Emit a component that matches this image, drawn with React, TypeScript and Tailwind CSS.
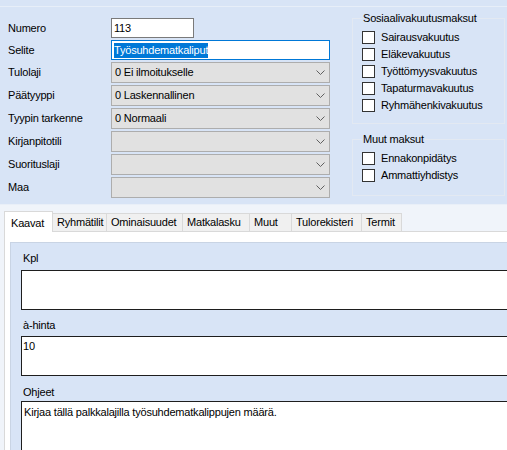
const labels = [
  "Numero",
  "Selite",
  "Tulolaji",
  "Päätyyppi",
  "Tyypin tarkenne",
  "Kirjanpitotili",
  "Suorituslaji",
  "Maa",
];

const combos = ["0 Ei ilmoitukselle", "0 Laskennallinen", "0 Normaali", "", "", ""];

const tabs = ["Kaavat", "Ryhmätilit", "Ominaisuudet", "Matkalasku", "Muut", "Tulorekisteri", "Termit"];
const tabWidths = ["w-[49px]", "w-[54px]", "w-[76px]", "w-[67px]", "w-[42px]", "w-[70px]", "w-[40px]"];

function Chevron() {
  return (
    <svg width="9" height="5" viewBox="0 0 9 5" className="shrink-0">
      <polyline points="0.5,0.5 4.5,4.5 8.5,0.5" fill="none" stroke="#606060" strokeWidth="1" />
    </svg>
  );
}

function Combo({ value }: { value: string }) {
  return (
    <div className="h-[21px] w-[219px] flex items-center justify-between bg-[#e1e1e1] border border-[#adadad] pl-[3px] pr-[4px]">
      <span>{value}</span>
      <Chevron />
    </div>
  );
}

function Check({ label }: { label: string }) {
  return (
    <div className="h-[17px] flex items-center gap-[6px]">
      <div className="w-[13px] h-[13px] bg-white border border-[#333333]" />
      <span>{label}</span>
    </div>
  );
}

function Group({ title, items, h }: { title: string; items: string[]; h: string }) {
  return (
    <fieldset className={`border border-[#e3e9f2] pl-[9px] pr-2 ${h} w-[153px]`}>
      <legend className="px-[1px] leading-[13px]">{title}</legend>
      <div className="flex flex-col pt-[4px]">
        {items.map((i) => (
          <Check key={i} label={i} />
        ))}
      </div>
    </fieldset>
  );
}

export default function App() {
  return (
    <div className="w-[507px] h-[450px] overflow-hidden bg-[#d8e4f6] text-black text-[11px] tracking-[-0.2px] font-['Liberation_Sans',Arial,sans-serif] flex flex-col">
      <div className="h-[6px] shrink-0" />
      <div className="h-px bg-[#e7eef8] shrink-0" />

      {/* Header form */}
      <div className="h-[197px] shrink-0 flex">
        <div className="pl-[8px] pt-[11px] flex flex-col gap-[2px]">
          <div className="flex items-center h-[20px]">
            <div className="w-[103px]">{labels[0]}</div>
            <div className="h-[20px] w-[83px] bg-white border border-[#7a7a7a] pl-[2px] flex items-center">113</div>
          </div>
          <div className="flex items-center h-[20px]">
            <div className="w-[103px]">{labels[1]}</div>
            <div className="h-[20px] w-[219px] bg-white border border-[#0078d7] pl-[2px] flex items-center">
              <span className="bg-[#0078d7] text-white leading-[15px]">Työsuhdematkaliput</span>
            </div>
          </div>
          {combos.map((c, i) => (
            <div key={i} className="flex items-center h-[21px]">
              <div className="w-[103px]">{labels[i + 2]}</div>
              <Combo value={c} />
            </div>
          ))}
        </div>

        <div className="ml-[22px] pt-[5px] flex flex-col gap-[9px]">
          <Group
            title="Sosiaalivakuutusmaksut"
            h="h-[112px]"
            items={["Sairausvakuutus", "Eläkevakuutus", "Työttömyysvakuutus", "Tapaturmavakuutus", "Ryhmähenkivakuutus"]}
          />
          <Group title="Muut maksut" h="h-[63px]" items={["Ennakonpidätys", "Ammattiyhdistys"]} />
        </div>
      </div>

      {/* Tabs */}
      <div className="h-px bg-[#e9eff8] shrink-0" />
      <div className="flex-1 bg-[#f0f4fa] flex flex-col pt-[6px] pl-[4px]">
        <div className="flex items-end h-[21px] -mb-px relative z-10">
          {tabs.map((t, i) =>
            i === 0 ? (
              <div
                key={t}
                className={`${tabWidths[i]} h-[21px] bg-white border border-b-0 border-[#d9d9d9] pl-[6px] pt-[3px]`}
              >
                {t}
              </div>
            ) : (
              <div
                key={t}
                className={`${tabWidths[i]} h-[18px] mb-px bg-[#f0f0f0] border border-l-0 border-b-0 border-[#d9d9d9] pl-[4px] flex items-center`}
              >
                {t}
              </div>
            )
          )}
        </div>
        <div className="flex-1 bg-white border-l border-t border-[#d9d9d9] pl-[5px] pt-[10px] flex">
          <div className="flex-1 bg-[#d8e4f6] border-l border-t border-[#c9d4e4] pl-[10px] pt-[8px] flex flex-col">
            <div className="ml-[2px] h-[14px] leading-[14px]">Kpl</div>
            <div className="mt-[5px] h-[40px] w-[520px] bg-white border border-[#1e1e1e]" />
            <div className="ml-[2px] mt-[8px] h-[14px] leading-[14px]">à-hinta</div>
            <div className="mt-[4px] h-[40px] w-[520px] bg-white border border-[#1e1e1e] pl-[1px] pt-[2px] leading-[14px]">
              10
            </div>
            <div className="ml-[2px] mt-[9px] h-[14px] leading-[14px]">Ohjeet</div>
            <div className="mt-[2px] h-[60px] w-[520px] bg-white border border-[#1e1e1e] pl-[2px] pt-[3px] leading-[14px]">
              Kirjaa tällä palkkalajilla työsuhdematkalippujen määrä.
            </div>
          </div>
        </div>
      </div>
    </div>
  );
}
